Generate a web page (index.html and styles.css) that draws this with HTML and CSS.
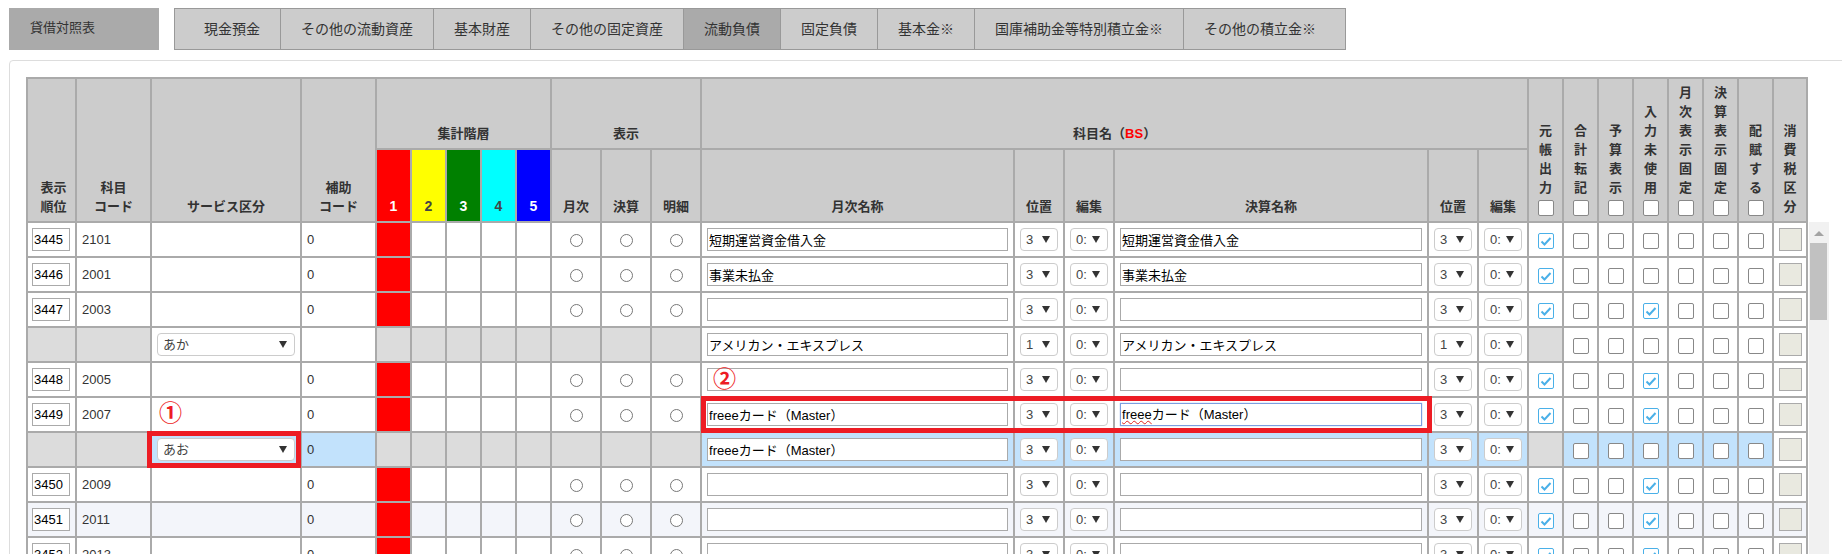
FILE: index.html
```html
<!DOCTYPE html>
<html lang="ja">
<head>
<meta charset="utf-8">
<title>貸借対照表</title>
<link rel="stylesheet" href="styles.css">
</head>
<body>
<header class="topbar">
  <div class="sheet-label">貸借対照表</div>
  <nav class="tabs">
    <a class="tab">現金預金</a><a class="tab">その他の流動資産</a><a class="tab">基本財産</a><a class="tab">その他の固定資産</a><a class="tab active">流動負債</a><a class="tab">固定負債</a><a class="tab">基本金※</a><a class="tab">国庫補助金等特別積立金※</a><a class="tab">その他の積立金※</a>
  </nav>
</header>
<main class="panel">
  <table class="grid">
    <colgroup>
      <col class="w51"><col class="w75"><col class="w150"><col class="w75">
      <col class="w35"><col class="w35"><col class="w35"><col class="w35"><col class="w35">
      <col class="w50"><col class="w50"><col class="w50">
      <col class="w313"><col class="w50"><col class="w50">
      <col class="w314"><col class="w50"><col class="w50">
      <col class="w35"><col class="w35"><col class="w35"><col class="w35"><col class="w35"><col class="w35"><col class="w35"><col class="w34">
    </colgroup>
    <thead>
      <tr class="hrow">
        <th rowspan="2" class="first">表示<br>順位</th>
        <th rowspan="2">科目<br>コード</th>
        <th rowspan="2">サービス区分</th>
        <th rowspan="2">補助<br>コード</th>
        <th colspan="5">集計階層</th>
        <th colspan="3">表示</th>
        <th colspan="6">科目名（<b class="bs">BS</b>）</th>
        <th rowspan="2">元<br>帳<br>出<br>力<span class="cb head"></span></th>
        <th rowspan="2">合<br>計<br>転<br>記<span class="cb head"></span></th>
        <th rowspan="2">予<br>算<br>表<br>示<span class="cb head"></span></th>
        <th rowspan="2">入<br>力<br>未<br>使<br>用<span class="cb head"></span></th>
        <th rowspan="2">月<br>次<br>表<br>示<br>固<br>定<span class="cb head"></span></th>
        <th rowspan="2">決<br>算<br>表<br>示<br>固<br>定<span class="cb head"></span></th>
        <th rowspan="2">配<br>賦<br>す<br>る<span class="cb head"></span></th>
        <th rowspan="2">消<br>費<br>税<br>区<br>分</th>
      </tr>
      <tr class="hrow">
        <th class="lv red">1</th><th class="lv yellow">2</th><th class="lv green">3</th><th class="lv cyan">4</th><th class="lv blue">5</th>
        <th>月次</th><th>決算</th><th>明細</th>
        <th>月次名称</th><th>位置</th><th>編集</th>
        <th>決算名称</th><th>位置</th><th>編集</th>
      </tr>
    </thead>
    <tbody>
      <tr>
        <td class="first"><input class="order" value="3445"></td><td class="tx">2101</td><td></td><td class="tx">0</td>
        <td class="red"></td><td></td><td></td><td></td><td></td>
        <td><input type="radio" class="rd"></td><td><input type="radio" class="rd"></td><td><input type="radio" class="rd"></td>
        <td class="fld"><input class="name" value="短期運営資金借入金"></td><td class="fld"><span class="sel">3</span></td><td class="fld"><span class="sel">0:</span></td>
        <td class="fld"><input class="name" value="短期運営資金借入金"></td><td class="fld"><span class="sel">3</span></td><td class="fld"><span class="sel">0:</span></td>
        <td><span class="cb on"><svg viewBox="0 0 14 14"><path d="M2.5 7.5 5.5 10.5 11.5 4"/></svg></span></td><td><span class="cb"></span></td><td><span class="cb"></span></td><td><span class="cb"></span></td><td><span class="cb"></span></td><td><span class="cb"></span></td><td><span class="cb"></span></td>
        <td class="fld"><span class="tax"></span></td>
      </tr>
      <tr>
        <td class="first"><input class="order" value="3446"></td><td class="tx">2001</td><td></td><td class="tx">0</td>
        <td class="red"></td><td></td><td></td><td></td><td></td>
        <td><input type="radio" class="rd"></td><td><input type="radio" class="rd"></td><td><input type="radio" class="rd"></td>
        <td class="fld"><input class="name" value="事業未払金"></td><td class="fld"><span class="sel">3</span></td><td class="fld"><span class="sel">0:</span></td>
        <td class="fld"><input class="name" value="事業未払金"></td><td class="fld"><span class="sel">3</span></td><td class="fld"><span class="sel">0:</span></td>
        <td><span class="cb on"><svg viewBox="0 0 14 14"><path d="M2.5 7.5 5.5 10.5 11.5 4"/></svg></span></td><td><span class="cb"></span></td><td><span class="cb"></span></td><td><span class="cb"></span></td><td><span class="cb"></span></td><td><span class="cb"></span></td><td><span class="cb"></span></td>
        <td class="fld"><span class="tax"></span></td>
      </tr>
      <tr>
        <td class="first"><input class="order" value="3447"></td><td class="tx">2003</td><td></td><td class="tx">0</td>
        <td class="red"></td><td></td><td></td><td></td><td></td>
        <td><input type="radio" class="rd"></td><td><input type="radio" class="rd"></td><td><input type="radio" class="rd"></td>
        <td class="fld"><input class="name" value=""></td><td class="fld"><span class="sel">3</span></td><td class="fld"><span class="sel">0:</span></td>
        <td class="fld"><input class="name" value=""></td><td class="fld"><span class="sel">3</span></td><td class="fld"><span class="sel">0:</span></td>
        <td><span class="cb on"><svg viewBox="0 0 14 14"><path d="M2.5 7.5 5.5 10.5 11.5 4"/></svg></span></td><td><span class="cb"></span></td><td><span class="cb"></span></td><td><span class="cb on"><svg viewBox="0 0 14 14"><path d="M2.5 7.5 5.5 10.5 11.5 4"/></svg></span></td><td><span class="cb"></span></td><td><span class="cb"></span></td><td><span class="cb"></span></td>
        <td class="fld"><span class="tax"></span></td>
      </tr>
      <tr>
        <td class="first off"></td><td class="off"></td><td class="fld"><span class="sel wide">あか</span></td><td></td>
        <td class="off"></td><td class="off"></td><td class="off"></td><td class="off"></td><td class="off"></td>
        <td class="off"></td><td class="off"></td><td class="off"></td>
        <td class="fld"><input class="name" value="アメリカン・エキスプレス"></td><td class="fld"><span class="sel">1</span></td><td class="fld"><span class="sel">0:</span></td>
        <td class="fld"><input class="name" value="アメリカン・エキスプレス"></td><td class="fld"><span class="sel">1</span></td><td class="fld"><span class="sel">0:</span></td>
        <td class="off"></td><td><span class="cb"></span></td><td><span class="cb"></span></td><td><span class="cb"></span></td><td><span class="cb"></span></td><td><span class="cb"></span></td><td><span class="cb"></span></td>
        <td class="fld"><span class="tax"></span></td>
      </tr>
      <tr>
        <td class="first"><input class="order" value="3448"></td><td class="tx">2005</td><td></td><td class="tx">0</td>
        <td class="red"></td><td></td><td></td><td></td><td></td>
        <td><input type="radio" class="rd"></td><td><input type="radio" class="rd"></td><td><input type="radio" class="rd"></td>
        <td class="fld"><input class="name" value=""></td><td class="fld"><span class="sel">3</span></td><td class="fld"><span class="sel">0:</span></td>
        <td class="fld"><input class="name" value=""></td><td class="fld"><span class="sel">3</span></td><td class="fld"><span class="sel">0:</span></td>
        <td><span class="cb on"><svg viewBox="0 0 14 14"><path d="M2.5 7.5 5.5 10.5 11.5 4"/></svg></span></td><td><span class="cb"></span></td><td><span class="cb"></span></td><td><span class="cb on"><svg viewBox="0 0 14 14"><path d="M2.5 7.5 5.5 10.5 11.5 4"/></svg></span></td><td><span class="cb"></span></td><td><span class="cb"></span></td><td><span class="cb"></span></td>
        <td class="fld"><span class="tax"></span></td>
      </tr>
      <tr>
        <td class="first"><input class="order" value="3449"></td><td class="tx">2007</td><td></td><td class="tx">0</td>
        <td class="red"></td><td></td><td></td><td></td><td></td>
        <td><input type="radio" class="rd"></td><td><input type="radio" class="rd"></td><td><input type="radio" class="rd"></td>
        <td class="fld"><input class="name" value="freeeカード（Master）"></td><td class="fld"><span class="sel">3</span></td><td class="fld"><span class="sel">0:</span></td>
        <td class="fld"><div class="name focused"><span class="spell">freee</span>カード（Master）</div></td><td class="fld"><span class="sel">3</span></td><td class="fld"><span class="sel">0:</span></td>
        <td><span class="cb on"><svg viewBox="0 0 14 14"><path d="M2.5 7.5 5.5 10.5 11.5 4"/></svg></span></td><td><span class="cb"></span></td><td><span class="cb"></span></td><td><span class="cb on"><svg viewBox="0 0 14 14"><path d="M2.5 7.5 5.5 10.5 11.5 4"/></svg></span></td><td><span class="cb"></span></td><td><span class="cb"></span></td><td><span class="cb"></span></td>
        <td class="fld"><span class="tax"></span></td>
      </tr>
      <tr class="selected">
        <td class="first off"></td><td class="off"></td><td class="fld"><span class="sel wide">あお</span></td><td class="tx">0</td>
        <td class="off"></td><td class="off"></td><td class="off"></td><td class="off"></td><td class="off"></td>
        <td class="off"></td><td class="off"></td><td class="off"></td>
        <td class="fld"><input class="name" value="freeeカード（Master）"></td><td class="fld"><span class="sel">3</span></td><td class="fld"><span class="sel">0:</span></td>
        <td class="fld"><input class="name" value=""></td><td class="fld"><span class="sel">3</span></td><td class="fld"><span class="sel">0:</span></td>
        <td class="off"></td><td><span class="cb"></span></td><td><span class="cb"></span></td><td><span class="cb"></span></td><td><span class="cb"></span></td><td><span class="cb"></span></td><td><span class="cb"></span></td>
        <td class="fld plain"><span class="tax"></span></td>
      </tr>
      <tr>
        <td class="first"><input class="order" value="3450"></td><td class="tx">2009</td><td></td><td class="tx">0</td>
        <td class="red"></td><td></td><td></td><td></td><td></td>
        <td><input type="radio" class="rd"></td><td><input type="radio" class="rd"></td><td><input type="radio" class="rd"></td>
        <td class="fld"><input class="name" value=""></td><td class="fld"><span class="sel">3</span></td><td class="fld"><span class="sel">0:</span></td>
        <td class="fld"><input class="name" value=""></td><td class="fld"><span class="sel">3</span></td><td class="fld"><span class="sel">0:</span></td>
        <td><span class="cb on"><svg viewBox="0 0 14 14"><path d="M2.5 7.5 5.5 10.5 11.5 4"/></svg></span></td><td><span class="cb"></span></td><td><span class="cb"></span></td><td><span class="cb on"><svg viewBox="0 0 14 14"><path d="M2.5 7.5 5.5 10.5 11.5 4"/></svg></span></td><td><span class="cb"></span></td><td><span class="cb"></span></td><td><span class="cb"></span></td>
        <td class="fld"><span class="tax"></span></td>
      </tr>
      <tr class="stripe">
        <td class="first"><input class="order" value="3451"></td><td class="tx">2011</td><td></td><td class="tx">0</td>
        <td class="red"></td><td></td><td></td><td></td><td></td>
        <td><input type="radio" class="rd"></td><td><input type="radio" class="rd"></td><td><input type="radio" class="rd"></td>
        <td class="fld"><input class="name" value=""></td><td class="fld"><span class="sel">3</span></td><td class="fld"><span class="sel">0:</span></td>
        <td class="fld"><input class="name" value=""></td><td class="fld"><span class="sel">3</span></td><td class="fld"><span class="sel">0:</span></td>
        <td><span class="cb on"><svg viewBox="0 0 14 14"><path d="M2.5 7.5 5.5 10.5 11.5 4"/></svg></span></td><td><span class="cb"></span></td><td><span class="cb"></span></td><td><span class="cb on"><svg viewBox="0 0 14 14"><path d="M2.5 7.5 5.5 10.5 11.5 4"/></svg></span></td><td><span class="cb"></span></td><td><span class="cb"></span></td><td><span class="cb"></span></td>
        <td class="fld"><span class="tax"></span></td>
      </tr>
      <tr>
        <td class="first"><input class="order" value="3452"></td><td class="tx">2013</td><td></td><td class="tx">0</td>
        <td class="red"></td><td></td><td></td><td></td><td></td>
        <td><input type="radio" class="rd"></td><td><input type="radio" class="rd"></td><td><input type="radio" class="rd"></td>
        <td class="fld"><input class="name" value=""></td><td class="fld"><span class="sel">3</span></td><td class="fld"><span class="sel">0:</span></td>
        <td class="fld"><input class="name" value=""></td><td class="fld"><span class="sel">3</span></td><td class="fld"><span class="sel">0:</span></td>
        <td><span class="cb on"><svg viewBox="0 0 14 14"><path d="M2.5 7.5 5.5 10.5 11.5 4"/></svg></span></td><td><span class="cb"></span></td><td><span class="cb"></span></td><td><span class="cb on"><svg viewBox="0 0 14 14"><path d="M2.5 7.5 5.5 10.5 11.5 4"/></svg></span></td><td><span class="cb"></span></td><td><span class="cb"></span></td><td><span class="cb"></span></td>
        <td class="fld"><span class="tax"></span></td>
      </tr>
    </tbody>
  </table>
  <div class="scrollbar">
    <span class="sb-up"></span>
    <span class="sb-thumb"></span>
  </div>
  <div class="mark mark-service"></div>
  <div class="mark mark-name"></div>
  <span class="num num-1">①</span>
  <span class="num num-2">②</span>
</main>
</body>
</html>
```
FILE: styles.css
```css
* { box-sizing: border-box; }
html, body {
  margin: 0;
  height: 554px;
  overflow: hidden;
  background: #fff;
}
body {
  font-family: "Liberation Sans", "Noto Sans CJK JP", sans-serif;
  font-size: 13px;
  color: #333;
}
.topbar {
  display: flex;
  gap: 15px;
  padding: 8px 0 0 9px;
  height: 50px;
}
.sheet-label {
  width: 150px;
  height: 42px;
  background: #aaa;
  padding-left: 21px;
  line-height: 40px;
  font-size: 13px;
}
.tabs {
  display: flex;
  height: 42px;
  background: #ccc;
  border: 1px solid #999;
  padding: 0 9px;
  font-size: 14px;
}
.tab {
  padding: 0 20px;
  line-height: 40px;
  border-right: 1px solid #999;
}
.tab.active { background: #aaa; }
.tab:last-child { border-right: 0; }

.panel {
  position: relative;
  display: flex;
  align-items: flex-start;
  width: 1850px;
  height: 600px;
  margin: 10px 0 0 9px;
  padding: 16px 0 0 16px;
  border: 1px solid #ddd;
  border-radius: 4px;
}
.grid {
  flex: none;
  width: 1782px;
  table-layout: fixed;
  border-collapse: separate;
  border-spacing: 0;
}
.w34 { width: 34px; }
.w35 { width: 35px; }
.w50 { width: 50px; }
.w51 { width: 51px; }
.w75 { width: 75px; }
.w150 { width: 150px; }
.w313 { width: 313px; }
.w314 { width: 314px; }

th, td {
  border-right: 2px solid #aaa;
  border-bottom: 2px solid #aaa;
  padding: 0;
}
.first { border-left: 2px solid #aaa; }
th {
  background: #ccc;
  font-weight: 700;
  font-size: 13px;
  line-height: 19px;
  text-align: center;
  vertical-align: bottom;
  padding-bottom: 5px;
}
.hrow { height: 73px; }
thead tr:first-child th { border-top: 2px solid #aaa; }
.bs { color: #f00; }
.lv { font-size: 14px; }
th.red { background: #f00; color: #fff; }
th.yellow { background: #ff0; color: #444; }
th.green { background: #008000; color: #fff; }
th.cyan { background: #0ff; color: #444; }
th.blue { background: #00f; color: #fff; }

tbody tr { height: 35px; }
td { background: #fff; vertical-align: middle; }
tr.stripe td { background: #f3f5fa; }
tr.selected td { background: #c2e2fc; }
td.off, tr.selected td.off { background: #dcdcdc; }
tr.selected td.plain { background: #fff; }
td.red, tr.stripe td.red { background: #f00; }
.tx { padding-left: 5px; }
.fld { padding: 0 5px; }
.first { padding-left: 4px; }

input { font: inherit; margin: 0; }
.order, .name {
  display: block;
  height: 23px;
  border: 1px solid #aaa;
  background: #fff;
  color: #000;
  padding: 0 1px;
  line-height: 21px;
  border-radius: 0;
  outline: 0;
}
.order { width: 38px; }
.name { width: 100%; white-space: nowrap; overflow: hidden; }
.focused {
  border-color: #7c9fe0;
  box-shadow: 0 0 1px #7c9fe0;
}
.spell { text-decoration: underline wavy #e02020 1px; }

.sel {
  position: relative;
  display: block;
  width: 38px;
  height: 23px;
  line-height: 21px;
  padding-left: 5px;
  border: 1px solid #ccc;
  border-radius: 4px;
  background: #fff;
  color: #444;
}
.sel::after {
  content: "";
  position: absolute;
  right: 7px;
  top: 7px;
  border-left: 4px solid transparent;
  border-right: 4px solid transparent;
  border-top: 7px solid #333;
}
.sel.wide { width: 138px; }

.rd {
  display: block;
  appearance: none;
  width: 13px;
  height: 13px;
  margin: 2px auto 0;
  border: 1px solid #777;
  border-radius: 50%;
  background: #fff;
}
.cb {
  display: block;
  width: 16px;
  height: 16px;
  margin: 3px auto 0;
  border: 1px solid #888;
  border-radius: 2px;
  background: #fff;
}
.cb svg { display: block; width: 14px; height: 14px; }
.cb svg path { fill: none; stroke: #4ab0e8; stroke-width: 2; }
.cb.on { border-color: #4ab0e8; }
.tax {
  display: block;
  width: 23px;
  height: 23px;
  background: #e9e9e0;
  border: 1px solid #aaa;
}

.scrollbar {
  flex: none;
  position: relative;
  width: 20px;
  height: 400px;
  margin-top: 145px;
  margin-left: 1px;
  background: #f1f1f1;
  padding: 21px 2px 0 1px;
}
.sb-up {
  position: absolute;
  left: 5px;
  top: 9px;
  border-left: 5px solid transparent;
  border-right: 5px solid transparent;
  border-bottom: 5px solid #a3a3a3;
}
.sb-thumb {
  display: block;
  height: 77px;
  background: #c1c1c1;
}

.mark {
  position: absolute;
  border: 5px solid #ed1c24;
}
.mark-service { left: 137px; top: 370px; width: 154px; height: 37px; }
.mark-name { left: 691px; top: 335px; width: 731px; height: 37px; }
.num {
  position: absolute;
  font-family: "Noto Sans CJK JP", sans-serif;
  font-size: 23px;
  font-weight: 700;
  line-height: 24px;
  color: #ed1c24;
}
.num-1 { left: 149px; top: 338px; }
.num-2 { left: 703px; top: 304px; }
```
